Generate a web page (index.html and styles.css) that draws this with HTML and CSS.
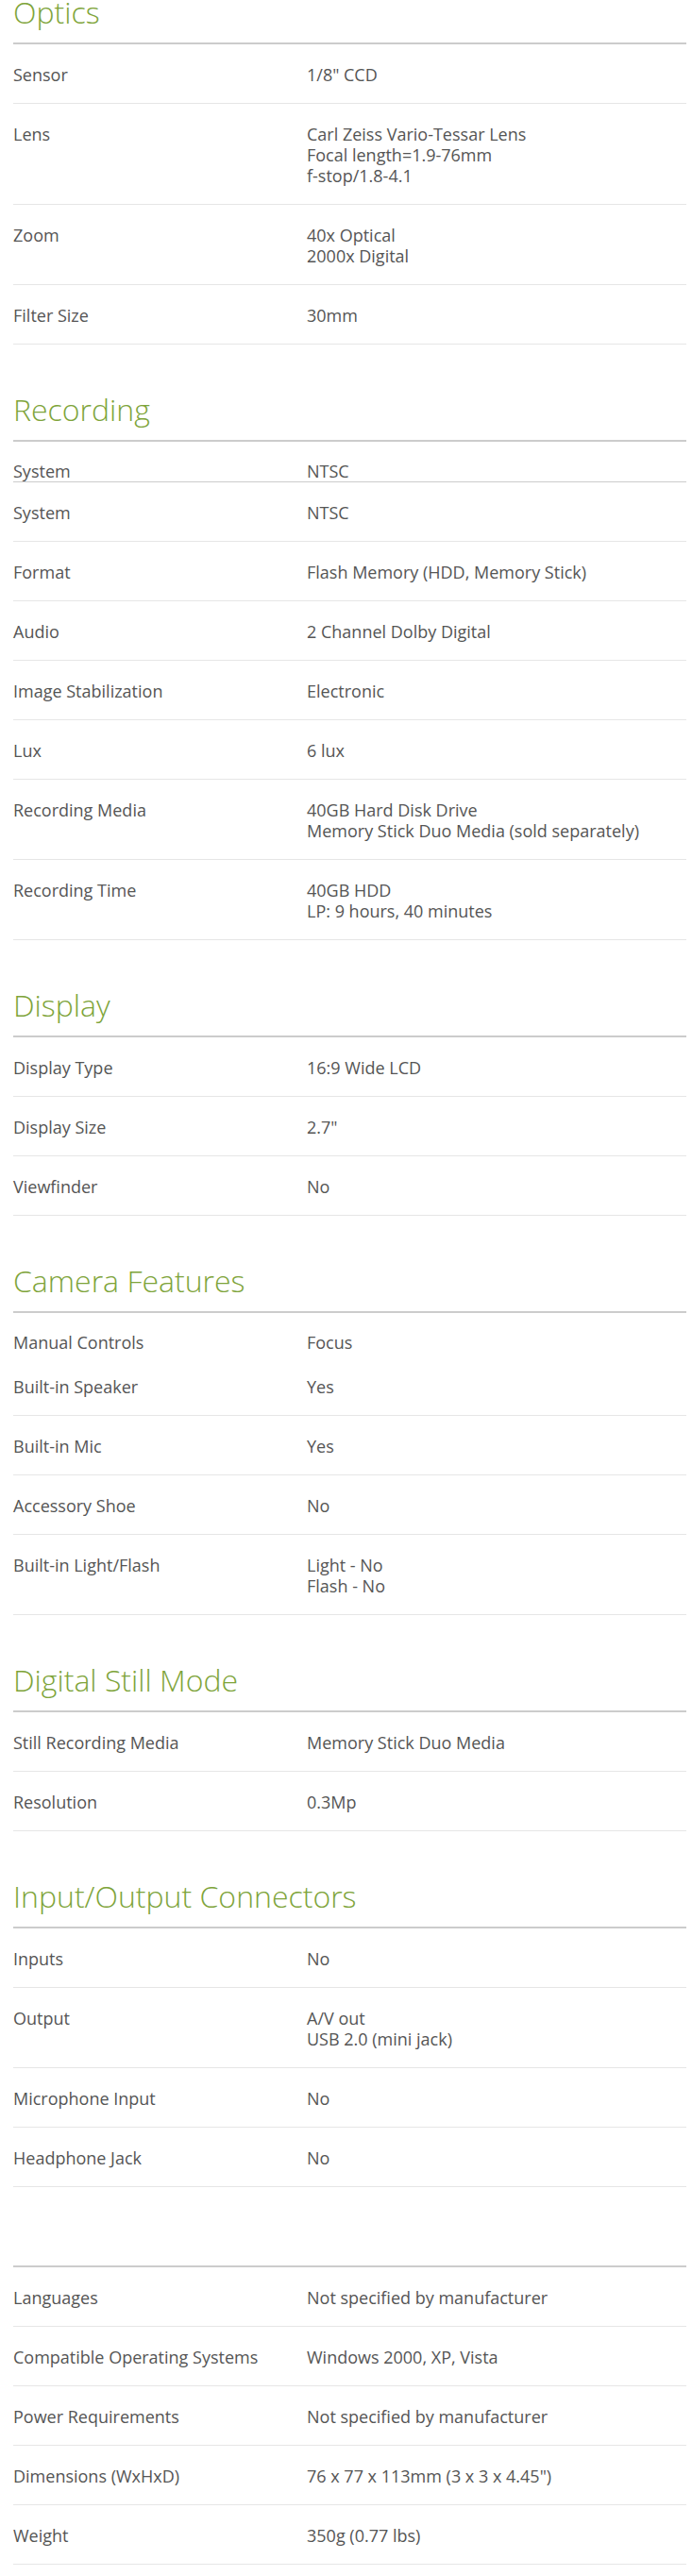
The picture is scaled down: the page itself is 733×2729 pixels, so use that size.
FILE: index.html
```html
<!DOCTYPE html>
<html lang="en">
<head>
<meta charset="utf-8">
<title>Specifications</title>
<link rel="stylesheet" href="styles.css">
</head>
<body>
<div class="specs">

  <section class="spec-section">
    <h2 class="spec-title">Optics</h2>
    <div class="spec-row"><div class="spec-label">Sensor</div><div class="spec-value">1/8" CCD</div></div>
    <div class="spec-row"><div class="spec-label">Lens</div><div class="spec-value">Carl Zeiss Vario-Tessar Lens<br>Focal length=1.9-76mm<br>f-stop/1.8-4.1</div></div>
    <div class="spec-row"><div class="spec-label">Zoom</div><div class="spec-value">40x Optical<br>2000x Digital</div></div>
    <div class="spec-row"><div class="spec-label">Filter Size</div><div class="spec-value">30mm</div></div>
  </section>

  <section class="spec-section">
    <h2 class="spec-title">Recording</h2>
    <div class="spec-row spec-row--head"><div class="spec-label">System</div><div class="spec-value">NTSC</div></div>
    <div class="spec-row"><div class="spec-label">System</div><div class="spec-value">NTSC</div></div>
    <div class="spec-row"><div class="spec-label">Format</div><div class="spec-value">Flash Memory (HDD, Memory Stick)</div></div>
    <div class="spec-row"><div class="spec-label">Audio</div><div class="spec-value">2 Channel Dolby Digital</div></div>
    <div class="spec-row"><div class="spec-label">Image Stabilization</div><div class="spec-value">Electronic</div></div>
    <div class="spec-row"><div class="spec-label">Lux</div><div class="spec-value">6 lux</div></div>
    <div class="spec-row"><div class="spec-label">Recording Media</div><div class="spec-value">40GB Hard Disk Drive<br>Memory Stick Duo Media (sold separately)</div></div>
    <div class="spec-row"><div class="spec-label">Recording Time</div><div class="spec-value">40GB HDD<br>LP: 9 hours, 40 minutes</div></div>
  </section>

  <section class="spec-section">
    <h2 class="spec-title">Display</h2>
    <div class="spec-row"><div class="spec-label">Display Type</div><div class="spec-value">16:9 Wide LCD</div></div>
    <div class="spec-row"><div class="spec-label">Display Size</div><div class="spec-value">2.7"</div></div>
    <div class="spec-row"><div class="spec-label">Viewfinder</div><div class="spec-value">No</div></div>
  </section>

  <section class="spec-section">
    <h2 class="spec-title">Camera Features</h2>
    <div class="spec-row spec-row--plain"><div class="spec-label">Manual Controls</div><div class="spec-value">Focus</div></div>
    <div class="spec-row"><div class="spec-label">Built-in Speaker</div><div class="spec-value">Yes</div></div>
    <div class="spec-row"><div class="spec-label">Built-in Mic</div><div class="spec-value">Yes</div></div>
    <div class="spec-row"><div class="spec-label">Accessory Shoe</div><div class="spec-value">No</div></div>
    <div class="spec-row"><div class="spec-label">Built-in Light/Flash</div><div class="spec-value">Light - No<br>Flash - No</div></div>
  </section>

  <section class="spec-section">
    <h2 class="spec-title">Digital Still Mode</h2>
    <div class="spec-row"><div class="spec-label">Still Recording Media</div><div class="spec-value">Memory Stick Duo Media</div></div>
    <div class="spec-row"><div class="spec-label">Resolution</div><div class="spec-value">0.3Mp</div></div>
  </section>

  <section class="spec-section">
    <h2 class="spec-title">Input/Output Connectors</h2>
    <div class="spec-row"><div class="spec-label">Inputs</div><div class="spec-value">No</div></div>
    <div class="spec-row"><div class="spec-label">Output</div><div class="spec-value">A/V out<br>USB 2.0 (mini jack)</div></div>
    <div class="spec-row"><div class="spec-label">Microphone Input</div><div class="spec-value">No</div></div>
    <div class="spec-row"><div class="spec-label">Headphone Jack</div><div class="spec-value">No</div></div>
  </section>

  <section class="spec-section">
    <h2 class="spec-title"></h2>
    <div class="spec-row"><div class="spec-label">Languages</div><div class="spec-value">Not specified by manufacturer</div></div>
    <div class="spec-row"><div class="spec-label">Compatible Operating Systems</div><div class="spec-value">Windows 2000, XP, Vista</div></div>
    <div class="spec-row"><div class="spec-label">Power Requirements</div><div class="spec-value">Not specified by manufacturer</div></div>
    <div class="spec-row"><div class="spec-label">Dimensions (WxHxD)</div><div class="spec-value">76 x 77 x 113mm (3 x 3 x 4.45")</div></div>
    <div class="spec-row"><div class="spec-label">Weight</div><div class="spec-value">350g (0.77 lbs)</div></div>
  </section>

</div>
</body>
</html>
```

FILE: styles.css
```css
html, body {
  margin: 0;
  padding: 0;
  background: #ffffff;
}

body {
  font-family: "Open Sans", "Liberation Sans", sans-serif;
  color: #555555;
}

.specs {
  margin: 0 6px 0 14px;
  padding: 4px 0 11px;
}

.spec-section {
  display: flex;
  flex-direction: column;
}

.spec-title {
  margin: 60px 0 0;
  padding: 0 0 23px;
  font-size: 32px;
  line-height: 18px;
  font-weight: 300;
  color: #7ea43a;
  border-bottom: 2px solid #cccccc;
}

.spec-section:first-child .spec-title {
  margin-top: 0;
}

.spec-row {
  display: grid;
  grid-template-columns: 311px 1fr;
  padding: 21px 0 19px;
  border-bottom: 1px solid #e6e6e6;
  font-size: 18px;
  line-height: 22px;
}

.spec-row--head {
  padding: 20px 0 0;
  border-bottom-color: #cccccc;
}

.spec-row--plain {
  padding: 20px 0 4px;
  border-bottom: none;
}

.spec-label,
.spec-value {
  min-width: 0;
}
```
